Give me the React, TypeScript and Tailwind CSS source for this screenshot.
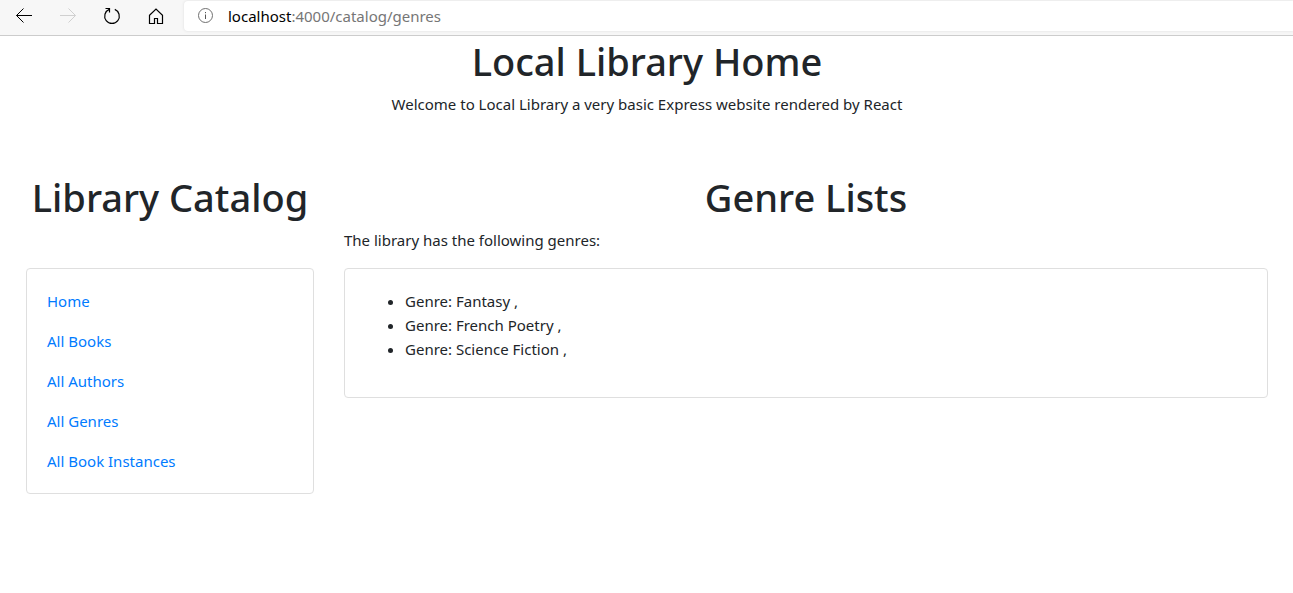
import React from "react";

const links = ["Home", "All Books", "All Authors", "All Genres", "All Book Instances"];
const genres = ["Fantasy", "French Poetry", "Science Fiction"];

function NavButton({ label, disabled, children }: { label: string; disabled?: boolean; children: React.ReactNode }) {
  return (
    <button
      type="button"
      aria-label={label}
      disabled={disabled}
      className="flex h-8 w-11 items-center justify-center text-black disabled:text-[#d0d0d0]"
    >
      <svg width="18" height="18" viewBox="0 0 18 18" fill="none" stroke="currentColor" strokeWidth="1">
        {children}
      </svg>
    </button>
  );
}

function BrowserBar() {
  return (
    <header className="flex h-9 items-start border-b border-[#cccccc] bg-[#f7f7f7] pl-[2px]">
      <NavButton label="Back">
        <path d="M17 8.5H1.5M8.5 1.5L1.5 8.5L8.5 15.5" />
      </NavButton>
      <NavButton label="Forward" disabled>
        <path d="M1 8.5H16.5M9.5 1.5L16.5 8.5L9.5 15.5" />
      </NavButton>
      <NavButton label="Refresh">
        <path d="M6.2 2.4A7.3 7.3 0 1 0 11.8 2.4M2.5 1.5H6.5V5.5" strokeWidth="1.2" />
      </NavButton>
      <NavButton label="Home">
        <path d="M2.5 8.2V16.5H7.5V11.5H10.5V16.5H15.5V8.2L9 2Z" strokeWidth="1.2" />
      </NavButton>
      <div className="ml-[6px] mt-px flex h-[30px] flex-1 items-center rounded-l bg-white pl-[14px] shadow-[0_0_3px_#dddddd]">
        <svg width="16" height="16" viewBox="0 0 16 16" fill="none" stroke="#707070">
          <circle cx="7.5" cy="7.5" r="7" />
          <path d="M7.5 6.5V11M7.5 4V5.2" stroke="#555555" />
        </svg>
        <span className="ml-[14px] text-[15px] leading-6 text-[#767676]">
          <span className="text-black">localhost</span>:4000/catalog/genres
        </span>
      </div>
    </header>
  );
}

const heading = "mb-[6px] text-center text-[38px] font-medium leading-[50px] whitespace-nowrap";
const card = "rounded border border-[#dfdfdf] bg-white p-5";

export default function App() {
  return (
    <div className="min-h-screen bg-white font-['Noto_Sans','Open_Sans',sans-serif] text-[15px] leading-6 text-[#212529]">
      <BrowserBar />
      <main className="pl-[11px] pr-[10px]">
        <section className="mb-14 text-center">
          <h1 className={heading}>Local Library Home</h1>
          <p>Welcome to Local Library a very basic Express website rendered by React</p>
        </section>
        <div className="grid grid-cols-4 items-start">
          <aside className="px-[15px]">
            <h1 className={heading}>Library Catalog</h1>
            <nav className={`${card} mt-[46px]`}>
              <ul className="flex flex-col gap-4">
                {links.map((link) => (
                  <li key={link}>
                    <a href="#" className="text-[#007bff]">{link}</a>
                  </li>
                ))}
              </ul>
            </nav>
          </aside>
          <section className="col-span-3 px-[15px]">
            <h1 className={heading}>Genre Lists</h1>
            <p className="mb-4">The library has the following genres:</p>
            <div className={card}>
              <ul className="mb-4 list-disc pl-10">
                {genres.map((genre) => (
                  <li key={genre}>Genre: {genre} ,</li>
                ))}
              </ul>
            </div>
          </section>
        </div>
      </main>
    </div>
  );
}
